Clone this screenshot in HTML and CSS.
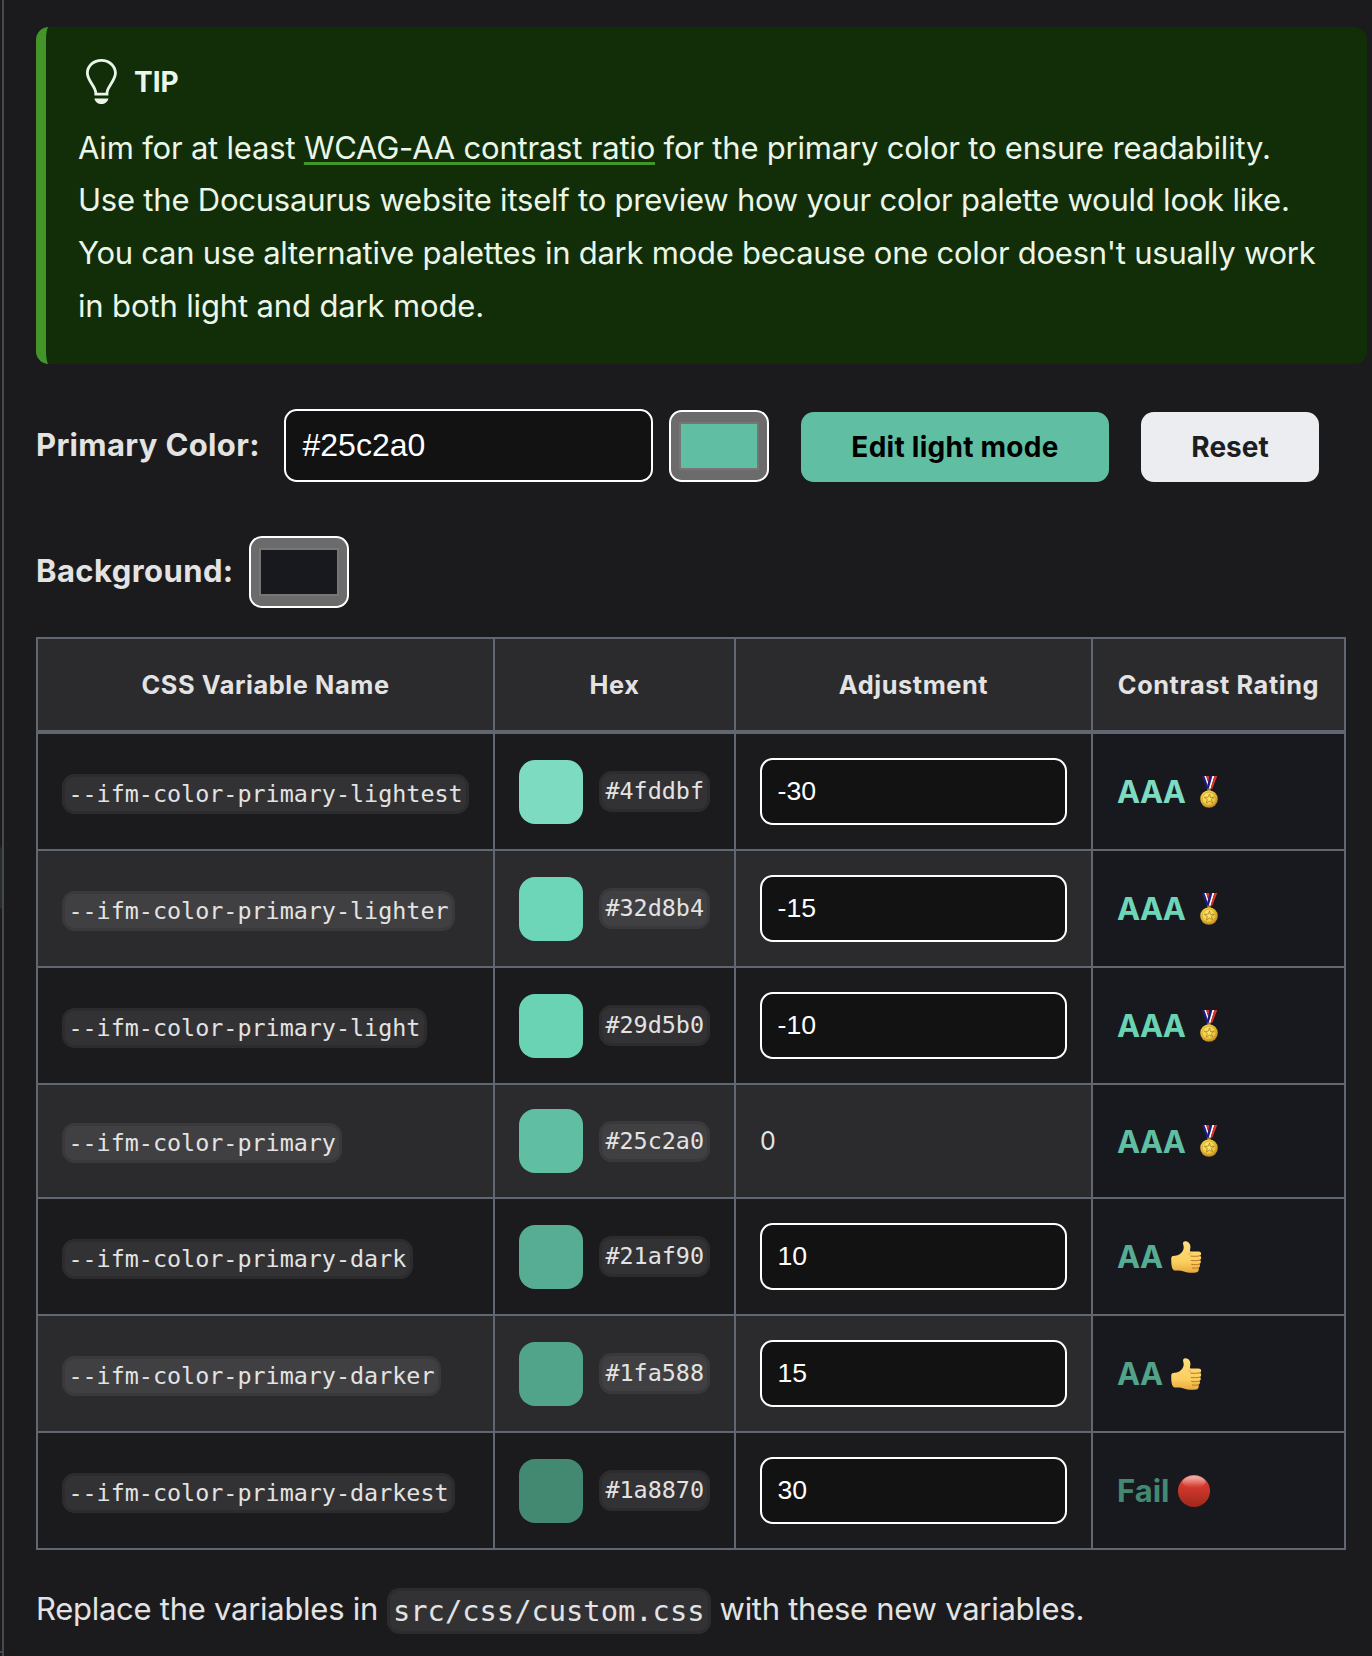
FILE: index.html
```html
<!DOCTYPE html>
<html lang="en">
<head>
<meta charset="utf-8">
<title>Color palette generator</title>
<link rel="stylesheet" href="styles.css">
</head>
<body>
<svg class="defs" width="0" height="0" aria-hidden="true">
  <defs>
    <radialGradient id="gold" cx=".45" cy=".4" r=".6"><stop offset="0" stop-color="#ffef7c"/><stop offset=".6" stop-color="#f0cb3f"/><stop offset="1" stop-color="#b97f22"/></radialGradient>
    <linearGradient id="red" x1="0" y1="0" x2="0" y2="1"><stop offset="0" stop-color="#e8736b"/><stop offset=".3" stop-color="#d63a2d"/><stop offset="1" stop-color="#a0271d"/></linearGradient>
    <linearGradient id="shine" x1="0" y1="0" x2="0" y2="1"><stop offset="0" stop-color="#fff" stop-opacity=".5"/><stop offset="1" stop-color="#fff" stop-opacity="0"/></linearGradient>
    <linearGradient id="skin" x1="0" y1="0" x2="0" y2="1"><stop offset="0" stop-color="#ffdf7d"/><stop offset=".65" stop-color="#fbcf60"/><stop offset="1" stop-color="#e8a93c"/></linearGradient>
    <symbol id="medal" viewBox="0 0 32 32">
      <path d="M8.8 0h2.600l4.600 13h-2.400z" fill="#1d1b80"/>
      <path d="M11.400 0h1.800l3.400 11-.6 2z" fill="#fff"/>
      <path d="M13.200 0h2.600l1.600 5-.8 6z" fill="#dd3326"/>
      <path d="M16.400 0h3l-3.600 13h-2l.8-4.500z" fill="#1d1b80"/>
      <path d="M19.400 0h2l-3.900 13h-1.700z" fill="#fff"/>
      <path d="M21.400 0h2.800l-4.800 12.500-1.900.5z" fill="#dd3326"/>
      <path d="M14.300 12.500h3.400v2.600h-3.400z" fill="#9a7a35"/>
      <circle cx="16" cy="23" r="8.800" fill="url(#gold)"/>
      <circle cx="16" cy="23" r="6.900" fill="none" stroke="#d3a22e" stroke-width=".7"/>
      <path d="M16.600 18l.9 3.500 3.900-.2-3.100 2.200 1.500 3.400-3.300-1.900-3.100 2.100.9-3.600-3-2.200 3.800-.1z" fill="#f7e064" stroke="#a97c1f" stroke-width=".8"/>
    </symbol>
    <symbol id="thumb" viewBox="0 0 32 32">
      <path d="M1.2 18c0-3 1.6-3.2 4-3.3 3.3-.2 6-2 7.500-4.600 1.300-2.300 1.200-4.200.5-6.500C12.600 1.600 13.500.2 15.300.2c3.300 0 5.500 3 5.100 6.300-.1 1.400-.6 2.600-.4 3.400.1.500.6.600 1.300.6h7.300c3 0 3.200 3.300 1.500 4.200 1.500 1 1.500 3.400-.1 4.300 1.300 1.100 1.100 3.300-.6 4 1 1.200.7 3-.8 3.700.5 1.700 0 4.600-2.800 4.900-3.600.4-8.800.3-12.100-1-1.700-.7-3.300-1-5-1H5.500C2 29.600 1.200 25 1.200 18z" fill="url(#skin)"/>
      <path d="M30 14.700c-2.200.7-6.500.8-9.700.3M30 19c-2.400.8-6.400.9-9.200.4M29.400 23c-2.200.8-5.600.8-8.200.3M28.500 26.800c-1.700.5-4.400.5-6.500.2" fill="none" stroke="#bb7420" stroke-width="1"/>
      <path d="M18.300 13.200c1.500-.4 2.400-.6 2.700-1.200" fill="none" stroke="#d89a3a" stroke-width=".8"/>
    </symbol>
    <symbol id="circle" viewBox="0 0 32 32">
      <circle cx="16" cy="16" r="16" fill="url(#red)"/>
      <ellipse cx="16" cy="7" rx="11.500" ry="6" fill="url(#shine)"/>
    </symbol>
  </defs>
</svg>
<aside class="rail"><span class="rail-handle"></span><span class="rail-foot"></span></aside>
<main class="content">
  <section class="alert">
    <h5 class="alert-title">
      <svg class="bulb" viewBox="0 0 12 16"><path fill-rule="evenodd" d="M6.500 0C3.480 0 1 2.190 1 5c0 .920.550 2.250 1 3 1.340 2.250 1.780 2.780 2 4v1h5v-1c.220-1.220.660-1.750 2-4 .450-.750 1-2.080 1-3 0-2.810-2.480-5-5.500-5zm3.640 7.480c-.250.440-.470.800-.670 1.110-.860 1.410-1.250 2.060-1.450 3.230-.020.050-.020.110-.020.170H5c0-.060 0-.130-.020-.170-.200-1.170-.590-1.830-1.450-3.230-.200-.310-.420-.670-.670-1.110C2.440 6.780 2 5.650 2 5c0-2.200 2.020-4 4.500-4 1.220 0 2.360.420 3.220 1.190C10.550 2.940 11 3.940 11 5c0 .660-.440 1.780-.860 2.480zM4 14h5c-.230 1.140-1.300 2-2.500 2s-2.270-.860-2.500-2z"/></svg>
      <span>TIP</span>
    </h5>
    <p class="alert-text">
      <span class="line l1">Aim for at least <a class="link">WCAG-AA contrast ratio</a> for the primary color to ensure readability.</span>
      <span class="line l2">Use the Docusaurus website itself to preview how your color palette would look like.</span>
      <span class="line l3">You can use alternative palettes in dark mode because one color doesn't usually work</span>
      <span class="line l4">in both light and dark mode.</span>
    </p>
  </section>

  <div class="row primary">
    <label class="label">Primary Color:</label>
    <div class="input hex-input">#25c2a0</div>
    <div class="picker"><span class="chip c-primary"></span></div>
    <button class="btn btn-primary">Edit light mode</button>
    <button class="btn btn-reset">Reset</button>
  </div>
  <div class="row background">
    <label class="label label-bg">Background:</label>
    <div class="picker"><span class="chip c-bg"></span></div>
  </div>

  <table class="table">
    <colgroup><col class="col-name"><col class="col-hex"><col class="col-adj"><col class="col-rate"></colgroup>
    <thead><tr><th>CSS Variable Name</th><th>Hex</th><th>Adjustment</th><th>Contrast Rating</th></tr></thead>
    <tbody>
      <tr class="first"><td><code class="code name">--ifm-color-primary-lightest</code></td><td><div class="hex"><span class="swatch s1"></span><code class="code">#4fddbf</code></div></td><td><div class="input num">-30</div></td><td class="rate t1"><div class="rating"><b>AAA</b><svg class="emoji medal"><use href="#medal"/></svg></div></td></tr>
      <tr><td><code class="code name">--ifm-color-primary-lighter</code></td><td><div class="hex"><span class="swatch s2"></span><code class="code">#32d8b4</code></div></td><td><div class="input num">-15</div></td><td class="rate t2"><div class="rating"><b>AAA</b><svg class="emoji medal"><use href="#medal"/></svg></div></td></tr>
      <tr><td><code class="code name">--ifm-color-primary-light</code></td><td><div class="hex"><span class="swatch s3"></span><code class="code">#29d5b0</code></div></td><td><div class="input num">-10</div></td><td class="rate t3"><div class="rating"><b>AAA</b><svg class="emoji medal"><use href="#medal"/></svg></div></td></tr>
      <tr class="base"><td><code class="code name">--ifm-color-primary</code></td><td><div class="hex"><span class="swatch s4"></span><code class="code">#25c2a0</code></div></td><td><div class="zero">0</div></td><td class="rate t4"><div class="rating"><b>AAA</b><svg class="emoji medal"><use href="#medal"/></svg></div></td></tr>
      <tr><td><code class="code name">--ifm-color-primary-dark</code></td><td><div class="hex"><span class="swatch s5"></span><code class="code">#21af90</code></div></td><td><div class="input num">10</div></td><td class="rate t5"><div class="rating"><b>AA</b><svg class="emoji"><use href="#thumb"/></svg></div></td></tr>
      <tr><td><code class="code name">--ifm-color-primary-darker</code></td><td><div class="hex"><span class="swatch s6"></span><code class="code">#1fa588</code></div></td><td><div class="input num">15</div></td><td class="rate t6"><div class="rating"><b>AA</b><svg class="emoji"><use href="#thumb"/></svg></div></td></tr>
      <tr><td><code class="code name">--ifm-color-primary-darkest</code></td><td><div class="hex"><span class="swatch s7"></span><code class="code">#1a8870</code></div></td><td><div class="input num">30</div></td><td class="rate t7"><div class="rating fail"><b>Fail</b><svg class="emoji"><use href="#circle"/></svg></div></td></tr>
    </tbody>
  </table>

  <p class="note"><span class="note-text">Replace the variables in</span><code class="code code-lg">src/css/custom.css</code><span class="note-text">with these new variables.</span></p>
</main>
</body>
</html>
```
FILE: styles.css
```css
* { box-sizing: border-box; }
body {
  margin: 0;
  display: flex;
  width: 1372px;
  height: 1656px;
  overflow: hidden;
  background: #1b1b1d;
  color: #e3e3e3;
  font-family: Inter, "Liberation Sans", sans-serif;
  font-size: 31px;
}
.defs { position: absolute; }

.rail {
  display: flex;
  flex-direction: column;
  width: 4px;
  height: 1656px;
  flex: none;
  border-right: 2px solid #444950;
}
.rail-handle { margin-top: 847px; height: 62px; background: #2a2b2d; border-radius: 0 2px 2px 0; }
.rail-foot { margin-top: 742px; height: 2px; background: #444950; }

.content { width: 1363px; margin-left: 32px; padding-top: 27px; flex: none; }

.alert {
  width: 1331px;
  height: 337px;
  padding: 32px 0 0 32px;
  border-left: 10px solid #439529;
  border-radius: 12.800px;
  background: #122e09;
  color: #ebf6e8;
}
.alert-title {
  display: flex;
  align-items: center;
  gap: 17px;
  margin: 0;
  height: 46px;
  font-size: 28px;
  font-weight: 700;
  line-height: 48px;
}
.bulb { width: 34px; height: 45px; margin: 0 0 1px 5px; fill: currentColor; }
.alert-text { margin: 16.700px 0 0; line-height: 52.800px; }
.line { display: block; white-space: nowrap; }
.l1 { letter-spacing: -.2px; }
.l2 { letter-spacing: -.22px; }
.l3 { letter-spacing: -.255px; }
.l4 { letter-spacing: -.14px; }
.link {
  text-decoration: underline 3px #439529;
  text-underline-offset: 3px;
  text-decoration-skip-ink: none;
}

.row { display: flex; align-items: flex-end; }
.primary { height: 73px; margin-top: 45px; }
.background { height: 72px; margin-top: 54px; }
.label { font-weight: 700; line-height: 54px; height: 64px; white-space: nowrap; width: 248px; letter-spacing: .34px; }
.label-bg { width: 213px; letter-spacing: .42px; }
.input {
  display: flex;
  align-items: center;
  border: 2px solid #fff;
  border-radius: 12.800px;
  background: #121212;
  color: #fff;
  font-family: "Liberation Sans", Arial, sans-serif;
}
.hex-input { width: 369px; height: 73px; padding: 0 0 0 16.500px; font-size: 32px; }
.picker {
  display: flex;
  align-items: center;
  justify-content: center;
  width: 100px;
  height: 72px;
  border: 2px solid #fff;
  border-radius: 12.800px;
  background: #6b6b6b;
}
.hex-input + .picker { margin-left: 16px; }
.chip { width: 80px; height: 48px; border: 2px solid #767676; }
.c-primary { background: #60bfa3; }
.c-bg { background: #18191e; }
.btn {
  height: 70px;
  margin: 0 0 0 32px;
  padding: 0;
  border: 0;
  border-radius: 12.800px;
  font: 700 28px/70px Inter, "Liberation Sans", sans-serif;
}
.btn-primary { width: 308px; background: #60bfa3; color: #000; letter-spacing: .26px; }
.btn-reset { width: 178px; background: #ebedf0; color: #1c1e21; }

.table {
  width: 1310px;
  margin-top: 29px;
  border-collapse: collapse;
  table-layout: fixed;
}
.col-name { width: 457px; }
.col-hex { width: 241px; }
.col-adj { width: 357px; }
.col-rate { width: 253px; }
th, td { border: 2px solid #606770; padding: 0 0 0 24px; text-align: left; vertical-align: middle; }
th {
  height: 94px;
  padding: 0;
  border-bottom-width: 4px;
  background: #2b2b2d;
  font-size: 25.300px;
  font-weight: 700;
  letter-spacing: .6px;
  text-align: center;
}
td { height: 117px; }
.first td { height: 118px; }
.base td { height: 114px; }
tbody tr:nth-child(even) { background: #2b2b2d; }

.code {
  display: inline-block;
  padding: 3px 3.400px 4px;
  border: 3px solid rgba(0, 0, 0, .1);
  border-radius: 12.800px;
  background: rgba(255, 255, 255, .1);
  font: 23.400px/28px "DejaVu Sans Mono", monospace;
  white-space: nowrap;
}
.name { position: relative; top: 1px; padding-bottom: 3px; }
.hex { display: flex; align-items: center; gap: 16px; }
.swatch { width: 64px; height: 64px; border-radius: 16px; flex: none; }
.num { width: 307px; height: 67px; padding: 0 0 0 15.500px; font-size: 26.670px; }
.zero { font-size: 25px; }

.s1 { background: #7cdbc1; } .t1 { color: #7cdbc1; }
.s2 { background: #6ed6b8; } .t2 { color: #6ed6b8; }
.s3 { background: #69d3b4; } .t3 { color: #69d3b4; }
.s4 { background: #60bfa3; } .t4 { color: #60bfa3; }
.s5 { background: #56ad93; } .t5 { color: #56ad93; }
.s6 { background: #51a38a; } .t6 { color: #51a38a; }
.s7 { background: #438871; } .t7 { color: #438871; }
.rate { background: #18191e; }
.rating { display: flex; align-items: center; gap: 8px; letter-spacing: -.700px; }
.fail { gap: 9px; letter-spacing: 0; }
.emoji { width: 32px; height: 32px; }

.note { display: flex; align-items: center; margin: 38px 0 0; height: 46px; white-space: nowrap; }
.note-text { letter-spacing: -.27px; padding-bottom: 5px; }
.code-lg { font-size: 28.750px; line-height: 34px; margin: 0 9px; padding: 3px; }
```
